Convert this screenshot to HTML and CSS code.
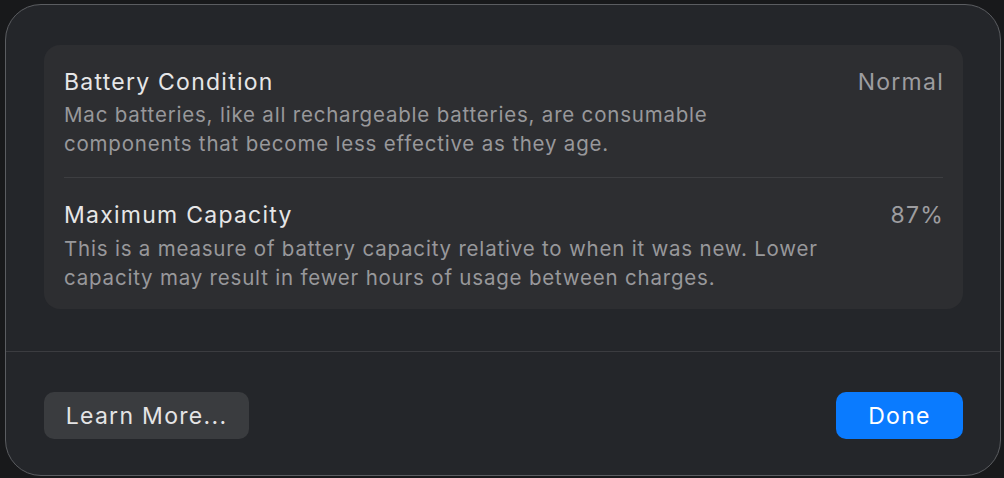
FILE: index.html
```html
<!DOCTYPE html>
<html lang="en">

<head>
    <meta charset="UTF-8">
    <meta name="viewport" content="width=device-width, initial-scale=1.0">
    <title>Battery Health</title>
    <link rel="stylesheet" href="styles.css">
</head>

<body>
    <div id="dialog">
        <div id="content">
            <div class="card">
                <div class="row">
                    <div class="row-text">
                        <div class="row-title">Battery Condition</div>
                        <div class="row-desc">Mac batteries, like all rechargeable batteries, are consumable<br>components that become less effective as they age.</div>
                    </div>
                    <div class="row-value">Normal</div>
                </div>
                <div class="row-sep"></div>
                <div class="row row-last">
                    <div class="row-text">
                        <div class="row-title">Maximum Capacity</div>
                        <div class="row-desc">This is a measure of battery capacity relative to when it was new. Lower<br>capacity may result in fewer hours of usage between charges.</div>
                    </div>
                    <div class="row-value">87%</div>
                </div>
            </div>
        </div>
        <div class="divider"></div>
        <div id="footer">
            <button class="btn btn-plain">Learn More...</button>
            <button class="btn btn-blue">Done</button>
        </div>
    </div>
</body>

</html>
```

FILE: styles.css
```css
html,
body {
    height: 100%;
}

body {
    margin: 0;
    padding: 4px 3px 2px 5px;
    box-sizing: border-box;
    background-color: #18191b;
    font-family: Inter, "Noto Sans", sans-serif;
    -webkit-font-smoothing: antialiased;
}

#dialog {
    height: 100%;
    box-sizing: border-box;
    display: flex;
    flex-direction: column;
    background-color: #24262a;
    border: 1px solid #5b5d61;
    border-radius: 36px;
    overflow: hidden;
}

#content {
    padding: 40px 37px 42px 38px;
}

.card {
    background-color: #2d2e31;
    border-radius: 16px;
    padding: 0 20px;
}

.row {
    display: flex;
    justify-content: space-between;
    align-items: flex-start;
    padding: 23px 0 19px;
}

.row-last {
    padding: 23px 0 17px;
}

.row-title {
    color: #e6e6e7;
    font-size: 23px;
    letter-spacing: 1.25px;
    line-height: 28px;
    margin-bottom: 4px;
}

.row-last .row-title {
    margin-bottom: 5px;
}

.row-desc {
    color: #98989b;
    font-size: 20.5px;
    letter-spacing: 0.8px;
    line-height: 29px;
}

.row-value {
    color: #9d9da0;
    font-size: 23px;
    letter-spacing: 1.25px;
    line-height: 28px;
    margin-right: -1px;
}

.row-sep {
    height: 1px;
    background-color: #3d3e41;
}

.divider {
    height: 1px;
    background-color: #3b3c40;
}

#footer {
    flex: 1;
    display: flex;
    justify-content: space-between;
    align-items: flex-start;
    padding: 40px 37px 0 38px;
}

.btn {
    height: 47px;
    border: none;
    border-radius: 10px;
    font-family: Inter, "Noto Sans", sans-serif;
    font-size: 23px;
    letter-spacing: 1.3px;
    cursor: pointer;
}

.btn-plain {
    width: 205px;
    background-color: #3a3c3f;
    color: #e4e4e5;
}

.btn-blue {
    width: 127px;
    background-color: #0a7bff;
    color: #ffffff;
}
```
